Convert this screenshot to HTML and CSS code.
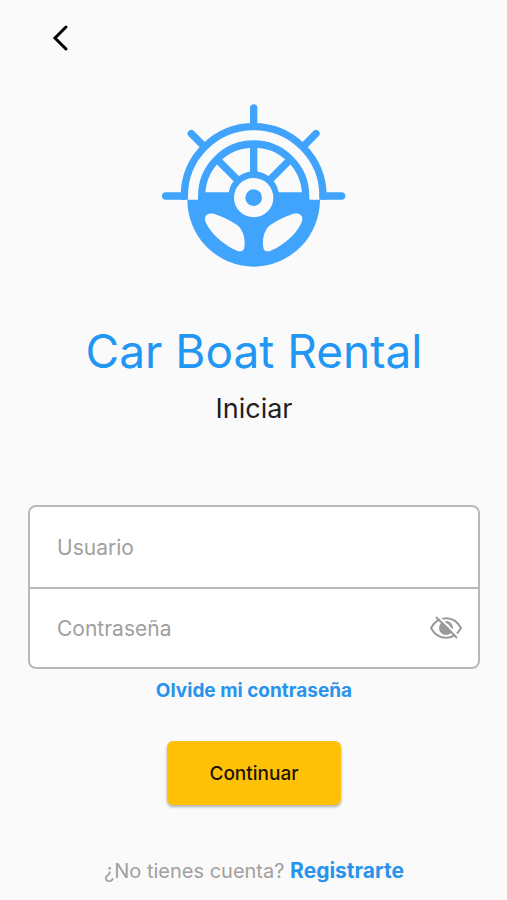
FILE: index.html
```html
<!DOCTYPE html>
<html lang="es">
<head>
    <meta charset="UTF-8">
    <meta name="viewport" content="width=device-width, initial-scale=1.0">
    <title>Car Boat Rental</title>
    <link rel="stylesheet" href="styles.css">
</head>
<body>
    <header class="top-bar">
        <button type="button" class="back-button" aria-label="Volver">
            <svg width="20" height="28" viewBox="0 0 20 28">
                <path d="M16 3 L5 14 L16 25" fill="none" stroke="#000" stroke-width="3" stroke-linecap="round" stroke-linejoin="miter"/>
            </svg>
        </button>
    </header>

    <main class="login">
        <!-- Logo -->
        <svg class="logo" viewBox="0 0 600 540" role="img" aria-label="Car Boat Rental">
            <g fill="none" stroke="#40a4fd" stroke-width="22" stroke-linecap="round">
                <path d="M299 39 V90"/>
                <path d="M112 116 L148 152"/>
                <path d="M486 116 L450 152"/>
                <path d="M35 303 H91"/>
                <path d="M563 303 H507"/>
                <path stroke-linecap="butt" d="M91 314 V303 A208 208 0 0 1 507 303 V314"/>
                <path stroke-linecap="butt" d="M143 316 V303 A156 156 0 0 1 455 303 V316"/>
                <path d="M299 150 V240"/>
                <path d="M190 194 L252 256"/>
                <path d="M408 194 L346 256"/>
            </g>
            <g fill="#40a4fd">
                <path d="M100 314 H143 V292 H455 V314 H498 A199 201 0 0 1 100 314 Z"/>
                <circle cx="299" cy="305" r="76"/>
            </g>
            <g fill="#fafafa">
                <circle cx="299" cy="308" r="59"/>
                <path d="M182 357 C213 368 235 381 252 392 C269 407 276 438 270 461 C267 470 257 470 249 467 C207 450 163 409 153 375 C151 360 164 352 182 357 Z"/>
                <path d="M416 357 C385 368 363 381 346 392 C329 407 323 438 329 461 C332 470 342 470 350 467 C392 450 436 409 445 375 C447 360 434 352 416 357 Z"/>
            </g>
            <circle cx="299" cy="308" r="25" fill="#40a4fd"/>
        </svg>

        <h1 class="title">Car Boat Rental</h1>
        <h2 class="subtitle">Iniciar</h2>

        <!-- Login form -->
        <form class="login-form">
            <div class="fields">
                <div class="field">
                    <input type="text" id="usuario" placeholder="Usuario" aria-label="Usuario">
                </div>
                <div class="field">
                    <input type="password" id="contrasena" placeholder="Contraseña" aria-label="Contraseña">
                    <button type="button" class="toggle-password" aria-label="Mostrar contraseña">
                        <svg width="34" height="24" viewBox="0 0 34 24">
                            <path d="M2 12 C9 -1 25 -1 32 12 C25 25 9 25 2 12 Z" fill="none" stroke="#999" stroke-width="2"/>
                            <circle cx="17" cy="12" r="7" fill="#999"/>
                            <path d="M17 8 A4 4 0 0 1 21 12" fill="none" stroke="#ccc" stroke-width="1"/>
                            <path d="M10 1 L29 20" stroke="#fff" stroke-width="2"/>
                            <path d="M7 1 L28 22" stroke="#999" stroke-width="2"/>
                        </svg>
                    </button>
                </div>
            </div>
            <a href="#" class="forgot">Olvide mi contraseña</a>
            <button type="submit" class="submit">Continuar</button>
        </form>

        <p class="register">¿No tienes cuenta? <a href="#">Registrarte</a></p>
    </main>
</body>
</html>
```
FILE: styles.css
```css
* {
    box-sizing: border-box;
}

body {
    margin: 0;
    background-color: #fafafa;
    color: #1f1f1f;
    font-family: Inter, "Liberation Sans", sans-serif;
}

button {
    border: 0;
    padding: 0;
    background: none;
    font-family: inherit;
    cursor: pointer;
}

svg {
    display: block;
}

a {
    color: #2793ec;
    font-weight: 700;
    text-decoration: none;
}

.top-bar {
    display: flex;
    padding: 24px 50px 0;
}

.login {
    display: flex;
    flex-direction: column;
    align-items: center;
    padding: 43px 27px 0 28px;
}

.logo {
    width: 200px;
    height: 180px;
}

.title {
    margin: 48px 0 0;
    color: #2196f3;
    font-size: 46px;
    font-weight: 400;
    line-height: 56px;
}

.subtitle {
    margin: 12px 0 0;
    font-size: 27px;
    font-weight: 400;
    line-height: 36px;
}

.login-form {
    display: flex;
    flex-direction: column;
    align-items: center;
    width: 100%;
    margin-top: 78px;
}

.fields {
    width: 100%;
    border: 2px solid #b8b8b8;
    border-radius: 8px;
    background-color: #fff;
}

.field {
    display: flex;
    align-items: center;
    height: 80px;
    padding: 0 15px 0 27px;
}

.field + .field {
    border-top: 2px solid #b8b8b8;
}

.field input {
    flex: 1;
    min-width: 0;
    border: 0;
    padding: 0;
    outline: 0;
    background: none;
    font-family: inherit;
    font-size: 21px;
}

.field input::placeholder {
    color: #a0a0a0;
    opacity: 1;
}

.forgot {
    margin-top: 10px;
    font-size: 19px;
    line-height: 24px;
}

.submit {
    width: 174px;
    height: 64px;
    margin-top: 38px;
    border-radius: 6px;
    background-color: #ffc107;
    box-shadow: 0 2px 3px rgba(0, 0, 0, 0.3);
    color: #1c1500;
    font-size: 19px;
    font-weight: 500;
}

.register {
    margin: 54px 0 0;
    color: #a0a0a0;
    font-size: 20px;
    line-height: 24px;
}

.register a {
    font-size: 21px;
}
```
